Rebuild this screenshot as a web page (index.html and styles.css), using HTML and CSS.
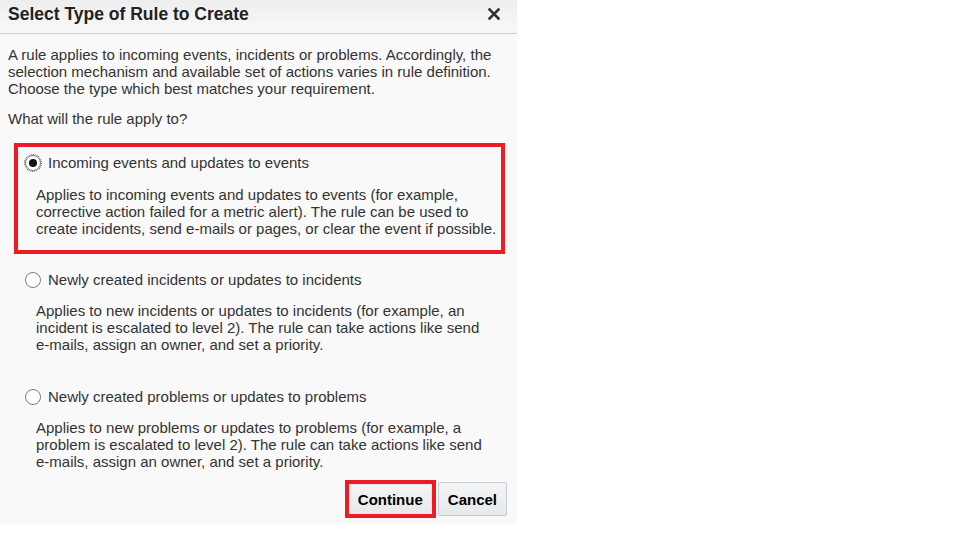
FILE: index.html
```html
<!DOCTYPE html>
<html>
<head>
<meta charset="utf-8">
<link rel="stylesheet" href="styles.css">
</head>
<body>
<div class="dialog">
  <div class="header">
    <h1 class="title">Select Type of Rule to Create</h1>
    <span class="close" aria-label="Close">
      <svg width="12" height="12" viewBox="0 0 12 12"><path d="M1.5 1.5 L10.5 10.5 M10.5 1.5 L1.5 10.5" stroke="#333" stroke-width="2.6" stroke-linecap="square"/></svg>
    </span>
  </div>
  <div class="content">
    <p class="intro">A rule applies to incoming events, incidents or problems. Accordingly, the selection mechanism and available set of actions varies in rule definition. Choose the type which best matches your requirement.</p>
    <p class="question">What will the rule apply to?</p>
    <div class="options">
      <div class="option highlight">
        <div class="opt-label"><span class="radio checked focus"></span><span>Incoming events and updates to events</span></div>
        <p class="opt-desc">Applies to incoming events and updates to events (for example, corrective action failed for a metric alert). The rule can be used to create incidents, send e-&#8288;mails or pages, or clear the event if possible.</p>
      </div>
      <div class="option">
        <div class="opt-label"><span class="radio"></span><span>Newly created incidents or updates to incidents</span></div>
        <p class="opt-desc">Applies to new incidents or updates to incidents (for example, an incident is escalated to level 2). The rule can take actions like send e-&#8288;mails, assign an owner, and set a priority.</p>
      </div>
      <div class="option">
        <div class="opt-label"><span class="radio"></span><span>Newly created problems or updates to problems</span></div>
        <p class="opt-desc">Applies to new problems or updates to problems (for example, a problem is escalated to level 2). The rule can take actions like send e-&#8288;mails, assign an owner, and set a priority.</p>
      </div>
    </div>
    <div class="actions">
      <span class="btn-mark"><button class="btn">Continue</button></span>
      <button class="btn">Cancel</button>
    </div>
  </div>
</div>
</body>
</html>
```
FILE: styles.css
```css
* { box-sizing: border-box; }
html, body { margin: 0; padding: 0; background: #ffffff; }
body { font-family: "Liberation Sans", Arial, sans-serif; color: #333333; font-size: 15px; }

.dialog {
  width: 517px;
  height: 525px;
  background: #f9f9f9;
  display: flex;
  flex-direction: column;
}

.header {
  flex: none;
  height: 34px;
  border-bottom: 1px solid #cbd0d8;
  background: linear-gradient(#eeeeee, #f8f8f8);
  display: flex;
  align-items: center;
  justify-content: space-between;
  padding: 0 17px 0 8px;
}
.title {
  margin: 0;
  font-size: 17.5px;
  font-weight: bold;
  color: #222222;
  line-height: 20px;
  padding-bottom: 5px;
}
.close { display: flex; padding-bottom: 5px; }

.content { padding: 12px 10px 0 8px; display: flex; flex-direction: column; flex: 1; min-height: 0; }

.intro { margin: 0; line-height: 17px; flex: none; }
.question { margin: 13px 0 0; line-height: 17px; flex: none; }

.options { flex: none; margin: 20px 0 0 10px; width: 483px; display: flex; flex-direction: column; gap: 14px; }
.option { padding: 7px 0 13px 7px; }
.option + .option { padding-bottom: 14px; }
.option:last-child { padding-bottom: 0; }
.option.highlight { outline: 4px solid #ed1c24; }

.opt-label { display: flex; align-items: center; gap: 7px; line-height: 17px; }
.opt-desc { margin: 15px 0 0 11px; line-height: 17px; }
.option + .option .opt-desc { margin-top: 14px; }

.radio {
  width: 16px; height: 16px;
  border: 1px solid #7a7a7a;
  border-radius: 50%;
  background: #ffffff;
  display: inline-flex;
  align-items: center;
  justify-content: center;
  flex: none;
}
.radio.checked::after {
  content: "";
  width: 8px; height: 8px; border-radius: 50%;
  background: #111111;
}
.radio.focus { outline: 1px dotted #555555; outline-offset: 0; box-shadow: 0 0 0 1px #f9f9f9; }

.actions {
  flex: none;
  margin-top: auto;
  margin-bottom: 7px;
  display: flex;
  justify-content: flex-end;
  align-items: center;
  gap: 2px;
}
.btn-mark { border: 4px solid #ed1c24; display: flex; }
.btn {
  font-family: "Liberation Sans", Arial, sans-serif;
  font-size: 15px;
  font-weight: bold;
  color: #000000;
  height: 34px;
  padding: 0 9px;
  background: linear-gradient(#f4f5f6, #e6e8ea);
  border: 1px solid #c4cbd3;
  border-radius: 2px;
}
.btn-mark .btn { height: 30px; border-color: #e6e8ea; padding: 0 8px; }
```
